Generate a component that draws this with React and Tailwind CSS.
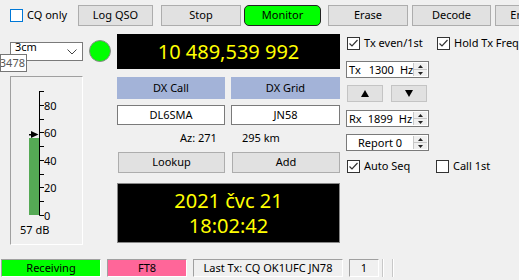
const Check = ({ checked, blue }) => (
  <div
    className={`w-[13px] h-[13px] shrink-0 border bg-white flex items-center justify-center ${
      blue ? "border-[#0078d7]" : "border-[#333333]"
    }`}
  >
    {checked && (
      <svg width="11" height="11" viewBox="0 0 11 11">
        <path d="M1.5 5.5 L4 8 L9.5 2" fill="none" stroke="#333" strokeWidth="1.2" />
      </svg>
    )}
  </div>
);

const Spin = ({ children, center }) => (
  <div className="w-[83px] h-[17px] border border-[#7a7a7a] bg-white flex items-stretch">
    <div className={`flex-1 flex items-center leading-none ${center ? "justify-center" : "pl-[2px]"}`}>
      {children}
    </div>
    <div className="w-[14px] flex flex-col border-l border-[#c8c8c8] bg-[#f0f0f0] mr-[1px] my-[1px]">
      <div className="flex-1 flex items-center justify-center border-b border-[#c8c8c8]">
        <svg width="5" height="3" viewBox="0 0 5 3">
          <path d="M0 3 L2.5 0 L5 3 Z" fill="#222" />
        </svg>
      </div>
      <div className="flex-1 flex items-center justify-center">
        <svg width="5" height="3" viewBox="0 0 5 3">
          <path d="M0 0 L2.5 3 L5 0 Z" fill="#222" />
        </svg>
      </div>
    </div>
  </div>
);

const Btn = ({ children, className = "" }) => (
  <div className={`h-[21px] bg-[#e1e1e1] border border-[#adadad] flex items-center justify-center ${className}`}>
    {children}
  </div>
);

const Sunken = ({ children, className = "" }) => (
  <div
    className={`h-full border-t border-l border-[#a0a0a0] border-r border-b border-r-white border-b-white flex items-center justify-center ${className}`}
  >
    {children}
  </div>
);

const Meter = () => {
  const ticks = Array.from({ length: 10 }, (_, i) => 14 + i * 13.78);
  const labels = { 1: "80", 3: "60", 5: "40", 7: "20", 9: "0" };
  return (
    <svg width="71" height="167" viewBox="0 0 71 167">
      <rect x="18" y="61" width="10" height="77" fill="#55aa55" />
      <line x1="28.5" y1="14" x2="28.5" y2="138.5" stroke="#000" />
      {ticks.map((y, i) => (
        <g key={i}>
          <line x1="28.5" y1={Math.round(y) + 0.5} x2="33" y2={Math.round(y) + 0.5} stroke="#000" />
          {labels[i] && (
            <text x="33" y={Math.round(y) + 4.5} fontSize="11" fontFamily="Noto Sans, sans-serif" fill="#000">
              {labels[i]}
            </text>
          )}
        </g>
      ))}
      <rect x="18" y="57" width="3" height="1.5" fill="#000" />
      <path d="M20 54 L27.5 57.5 L20 61 Z" fill="#000" />
      <text x="9" y="157" fontSize="11" fontFamily="Noto Sans, sans-serif" fill="#000">
        57 dB
      </text>
    </svg>
  );
};

export default function App() {
  return (
    <div className="w-[519px] h-[280px] bg-[#f0f0f0] overflow-hidden text-[11px] text-black font-['Noto_Sans',sans-serif] flex flex-col">
      {/* toolbar */}
      <div className="h-[34px] flex items-start pt-[5px] whitespace-nowrap">
        <div className="ml-[10px] w-[68px] shrink-0 h-[21px] flex items-center">
          <Check blue />
          <span className="ml-[4px]">CQ only</span>
        </div>
        <Btn className="w-[75px] shrink-0">Log QSO</Btn>
        <Btn className="ml-[8px] w-[80px] shrink-0">Stop</Btn>
        <div className="ml-[3px] w-[77px] h-[21px] shrink-0 bg-[#00ff00] border border-[#222] rounded-[5px] flex items-center justify-center">
          Monitor
        </div>
        <Btn className="ml-[7px] w-[80px] shrink-0">Erase</Btn>
        <Btn className="ml-[4px] w-[79px] shrink-0">Decode</Btn>
        <Btn className="ml-[4px] w-[80px] shrink-0">Enable Tx</Btn>
      </div>

      {/* main */}
      <div className="h-[225px] flex">
        {/* left column */}
        <div className="w-[117px] shrink-0 relative">
          <div className="mt-[6px] h-[22px] flex items-center">
            <div className="ml-[10px] w-[73px] h-[19px] border border-[#7a7a7a] bg-white flex items-start justify-between overflow-hidden">
              <span className="pl-[4px] leading-[12px] -mt-[2px]">3cm</span>
              <svg width="10" height="6" viewBox="0 0 10 6" className="mt-[6px] mr-[5px]">
                <path d="M0.5 0.5 L5 5 L9.5 0.5" fill="none" stroke="#444" />
              </svg>
            </div>
            <div className="ml-[6px] w-[22px] h-[22px] rounded-full bg-[#00ff00] border border-[#8a8a8a]" />
          </div>
          <div className="absolute left-0 top-[20px] w-[27px] h-[18px] bg-white border border-[#767676] flex items-center justify-end overflow-hidden pr-[1px] text-[#575757]">
            3478
          </div>
          <div className="mt-[14px] ml-[10px] w-[73px] h-[169px] border-t border-l border-[#a0a0a0] border-r border-b border-r-white border-b-white">
            <Meter />
          </div>
        </div>

        {/* center column */}
        <div className="w-[223px] shrink-0 flex flex-col">
          <div className="h-[35px] bg-black text-[#ffff00] text-[20px] flex items-center justify-center leading-none">
            10 489,539 992
          </div>
          <div className="mt-[8px] flex">
            <div className="w-[108px] h-[22px] bg-[#a3b3d8] flex items-center justify-center">DX Call</div>
            <div className="ml-[6px] w-[109px] h-[22px] bg-[#a3b3d8] flex items-center justify-center">DX Grid</div>
          </div>
          <div className="mt-[6px] flex">
            <div className="w-[108px] h-[20px] border border-[#7a7a7a] bg-white flex items-center justify-center">DL6SMA</div>
            <div className="ml-[6px] w-[109px] h-[20px] border border-[#7a7a7a] bg-white flex items-center justify-center">JN58</div>
          </div>
          <div className="h-[26px] flex items-center pl-[63px]">
            <span>Az: 271</span>
            <span className="ml-[25px]">295 km</span>
          </div>
          <div className="mt-[1px] flex">
            <Btn className="ml-[1px] w-[107px] h-[20px]">Lookup</Btn>
            <Btn className="ml-[7px] w-[108px] h-[20px]">Add</Btn>
          </div>
          <div className="mt-[10px] h-[60px] bg-black border border-[#888] text-[#ffff00] text-[20px] leading-[25px] flex flex-col items-center justify-center">
            <span>2021 čvc 21</span>
            <span>18:02:42</span>
          </div>
        </div>

        {/* right column */}
        <div className="ml-[6px] flex flex-col whitespace-nowrap">
          <div className="mt-[3px] h-[13px] flex items-center">
            <div className="ml-[1px] flex items-center w-[90px]">
              <Check checked />
              <span className="ml-[4px]">Tx even/1st</span>
            </div>
            <Check checked />
            <span className="ml-[4px]">Hold Tx Freq</span>
          </div>
          <div className="mt-[11px]">
            <Spin>
              <span>Tx</span>
              <span className="ml-[8px]">1300</span>
              <span className="ml-[6px]">Hz</span>
            </Spin>
          </div>
          <div className="mt-[7px] flex">
            <div className="ml-[1px] w-[36px] h-[17px] bg-[#e1e1e1] border border-[#c4c4c4] flex items-center justify-center">
              <svg width="8" height="7" viewBox="0 0 8 7">
                <path d="M0 7 L4 0 L8 7 Z" fill="#000" />
              </svg>
            </div>
            <div className="ml-[8px] w-[36px] h-[17px] bg-[#e1e1e1] border border-[#c4c4c4] flex items-center justify-center">
              <svg width="8" height="7" viewBox="0 0 8 7">
                <path d="M0 0 L4 7 L8 0 Z" fill="#000" />
              </svg>
            </div>
          </div>
          <div className="mt-[8px]">
            <Spin>
              <span>Rx</span>
              <span className="ml-[6px]">1899</span>
              <span className="ml-[6px]">Hz</span>
            </Spin>
          </div>
          <div className="mt-[7px]">
            <Spin center>Report 0</Spin>
          </div>
          <div className="mt-[9px] h-[13px] flex items-center">
            <div className="ml-[1px] flex items-center w-[89px]">
              <Check checked />
              <span className="ml-[4px]">Auto Seq</span>
            </div>
            <Check />
            <span className="ml-[4px]">Call 1st</span>
          </div>
        </div>
      </div>

      {/* status bar */}
      <div className="h-[18px] flex whitespace-nowrap">
        <Sunken className="ml-[1px] w-[100px] bg-[#00ff00]">Receiving</Sunken>
        <Sunken className="ml-[6px] w-[80px] bg-[#ff6699]">FT8</Sunken>
        <Sunken className="ml-[6px] w-[150px]">Last Tx: CQ OK1UFC JN78</Sunken>
        <Sunken className="ml-[6px] w-[30px]">1</Sunken>
        <div className="ml-[3px] w-[2px] h-full border-l border-[#c8c8c8] border-r border-r-white" />
        <div className="ml-[8px] w-[2px] h-full border-l border-[#c8c8c8] border-r border-r-white" />
      </div>
    </div>
  );
}
